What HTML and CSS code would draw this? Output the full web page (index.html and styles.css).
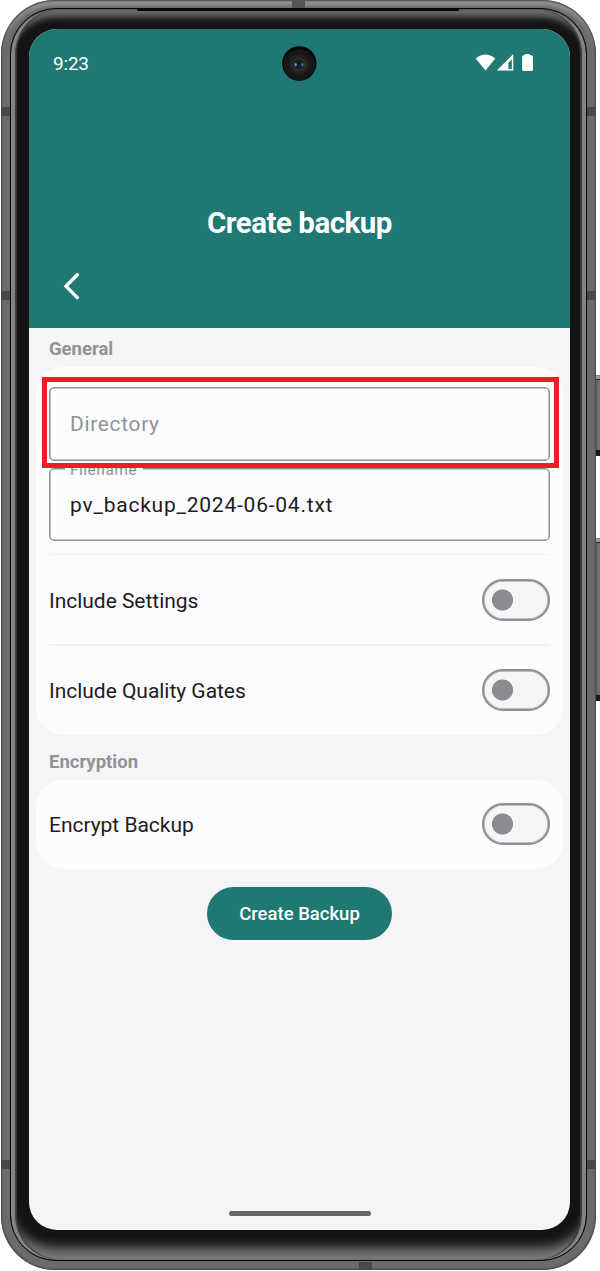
FILE: index.html
```
<!DOCTYPE html>
<html lang="en">
<head>
<meta charset="utf-8">
<title>Create backup</title>
<link rel="stylesheet" href="styles.css">
</head>
<body>
<div class="stage">
  <span class="side-key power"></span>
  <span class="side-key volume"></span>
  <div class="phone">
    <span class="antenna a1"></span><span class="antenna a2"></span><span class="antenna a3"></span>
    <span class="antenna a4"></span><span class="antenna a5"></span><span class="antenna a6"></span>
    <span class="antenna top"></span><span class="antenna bottom"></span>
    <div class="bezel">
      <span class="speaker"></span>
      <main class="screen">
        <header class="header">
          <div class="status">
            <span class="time">9:23</span>
            <svg class="status-icons" width="60" height="20" viewBox="0 0 60 20" fill="#fff">
              <path d="M.7 5.6Q10.5-2.600 20.300 5.600L10.500 17.400Z"/>
              <path fill-rule="evenodd" d="M38.300 1V17.500H21.800ZM36.800 6.200L33.400 9.700V16H36.800Z"/>
              <path d="M49.700 1H54.800V2.300H56.400Q58 2.300 58 3.900V16.500Q58 18 56.400 18H48.700Q47.100 18 47.100 16.500V3.900Q47.100 2.300 48.700 2.300H49.700Z"/>
            </svg>
          </div>
          <h1 class="title">Create backup</h1>
          <svg class="back" width="18" height="28" viewBox="0 0 18 28"><path d="M15.300 2.800L4 14.200L15.300 25.600" fill="none" stroke="#fff" stroke-width="3.400" stroke-linecap="round"/></svg>
          <svg class="camera" width="36" height="36" viewBox="0 0 36 36">
            <circle cx="18.300" cy="17.500" r="17.200" fill="#030505"/><circle cx="18.300" cy="18.700" r="15.700" fill="#151616"/><circle cx="18" cy="18.500" r="10.500" fill="#202122"/>
            <circle cx="18" cy="18.500" r="7.200" fill="#2b2d2e"/><circle cx="18" cy="18.500" r="5" fill="#191d24"/>
            <ellipse cx="14.700" cy="18.700" rx="1.200" ry="1.700" fill="#5e9c98"/><ellipse cx="21.400" cy="18.700" rx="1.200" ry="1.700" fill="#5368ad"/>
          </svg>
        </header>
        <h2 class="section general">General</h2>
        <section class="card">
          <div class="field"><span class="placeholder">Directory</span></div>
          <div class="field filename"><span class="label">Filename</span><span class="value">pv_backup_2024-06-04.txt</span></div>
          <div class="row"><span class="name">Include Settings</span><span class="toggle"></span></div>
          <div class="row second"><span class="name">Include Quality Gates</span><span class="toggle"></span></div>
          <span class="highlight"></span>
        </section>
        <h2 class="section encryption">Encryption</h2>
        <section class="card single">
          <div class="row"><span class="name">Encrypt Backup</span><span class="toggle"></span></div>
        </section>
        <button class="submit">Create Backup</button>
        <span class="home"></span>
      </main>
    </div>
  </div>
</div>
</body>
</html>
```
FILE: styles.css
```
* { box-sizing: border-box; }
body { margin: 0; background: #fff; font-family: Roboto, sans-serif; }
.stage { position: relative; width: 600px; height: 1271px; overflow: hidden; padding-left: 1px; }
.side-key { position: absolute; left: 595px; width: 7px; background: linear-gradient(90deg, #555, #77756f 60%, #555); border-top: 1px solid #888; border-bottom: 6px solid #171717; box-shadow: inset 0 3px #999, inset 0 4px #222; }
.power { top: 375px; height: 81px; }
.volume { top: 538px; height: 163px; }
.phone { position: relative; width: 595px; height: 1270px; padding: 8px 9px 9px; border-radius: 54px; background: #6b6b6b;
  box-shadow: inset 0 0 2px 1px #444, inset 0 7px 4px -2px #999; }
.bezel { position: relative; height: 1253px; padding: 20px 16px 29px 18px; border: 1px solid #070707; border-radius: 46px; background: #141414;
  box-shadow: inset 0 1px #555, inset 4px 0 1px #858585, inset -4px 0 1px #858585, inset 6px 0 1px #3a3a3a, inset -6px 0 1px #3a3a3a, inset 0 12px 6px -4px #6c6c6c, inset 0 -19px 12px -7px #7c7c7c; }
.speaker { position: absolute; left: 126px; top: -1px; width: 322px; height: 3px; border-radius: 2px; background: #080808; }
.antenna { position: absolute; background: #484848; width: 9px; height: 9px; }
.a1 { left: 0; top: 107px; }
.a2 { left: 0; top: 291px; }
.a3 { left: 0; top: 1160px; }
.a4 { right: 0; top: 107px; }
.a5 { right: 0; top: 291px; }
.a6 { right: 0; top: 1160px; }
.antenna.top { left: 291px; top: 1px; width: 13px; height: 7px; background: #555; }
.antenna.bottom { left: 358px; bottom: 0; width: 13px; height: 8px; }
.screen { display: flex; flex-direction: column; height: 1200.500px; border-radius: 28px; overflow: hidden; background: #f5f5f8; padding-bottom: 14px; }
.header { position: relative; display: flex; flex-direction: column; height: 299px; flex: none; background: #1f7872; color: #fff; }
.status { display: flex; justify-content: space-between; padding: 23px 35px 0 24px; height: 48px; }
.time { font-size: 19px; line-height: 23px; letter-spacing: -.2px; }
.status-icons { flex: none; margin-top: 1px; }
.title { margin: 128px 0 0; text-align: center; font-size: 29.500px; line-height: 36px; font-weight: 700; letter-spacing: -.5px; }
.back { margin: 31px 0 0 33px; }
.camera { position: absolute; left: 252px; top: 17px; }
.section { flex: none; margin: 0; padding-left: 20px; font-size: 18.500px; line-height: 22px; font-weight: 700; color: #929295; }
.general { margin-top: 10px; }
.general + .card { margin-top: 7px; }
.encryption { margin-top: 16px; }
.card { position: relative; flex: none; margin: 8px 7px 0; padding: 20px 13px 0; height: 368px; border-radius: 27px; background: #fcfcfe; color: #1c1b1f; }
.card.single { margin-top: 7px; height: 89px; padding-top: 0; }
.field { position: relative; display: flex; align-items: center; height: 74px; border: 1px solid #8e8e91; box-shadow: inset 0 0 0 .5px #8e8e91; border-radius: 5px; padding-left: 20px; font-size: 21px; letter-spacing: .65px; }
.value { letter-spacing: .770px; }
.placeholder { color: #929295; }
.filename { margin-top: 7px; height: 73px; }
.label { position: absolute; left: 15px; top: -9px; padding: 0 6px 0 5px; background: linear-gradient(#fcfcfe, #fcfcfe) 0 8px / 100% 5px no-repeat; color: #929295; font-size: 15.500px; line-height: 20px; letter-spacing: .5px; }
.row { display: flex; justify-content: space-between; align-items: center; height: 91px; font-size: 21px; letter-spacing: -.03px; }
.name { padding-top: 2px; }
.filename + .row { margin-top: 13px; border-top: 1px solid #f2f2f4; }
.second { border-top: 2px solid #f2f2f4; height: 90px; margin-top: -1px; }
.single .row { height: 88px; }
.toggle { width: 68.500px; height: 42px; border: 2px solid #8e8e91; border-radius: 21px; background: radial-gradient(circle at 18.500px 19px, #8c8b90 10.200px, #f5f5f8 10.900px); box-shadow: inset 0 0 0 .5px #8e8e91; }
.highlight { position: absolute; left: 6px; right: 4px; top: 10px; height: 91px; border: 5px solid #ee1c25; }
.submit { flex: none; align-self: center; margin-top: 18px; width: 185px; height: 53px; border: 0; border-radius: 27px; background: #1f7872; color: #fff; font: 500 18.500px/22px Roboto, sans-serif; letter-spacing: 0; }
.home { align-self: center; margin-top: auto; width: 142px; height: 5px; border-radius: 3px; background: #656565; }
```
